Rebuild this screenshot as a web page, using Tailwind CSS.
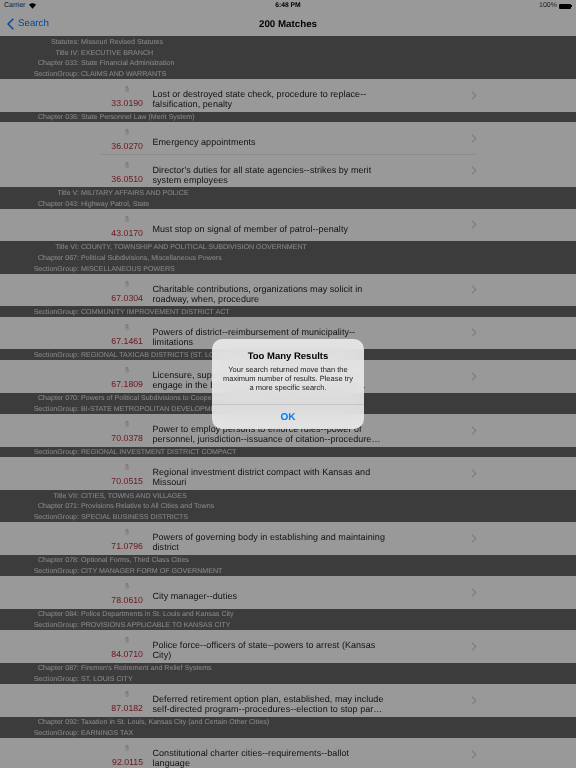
<!DOCTYPE html>
<html lang="en">
<head>
  <meta charset="UTF-8" />
  <title>200 Matches</title>
  <script src="https://cdn.jsdelivr.net/npm/@tailwindcss/browser@4"></script>
</head>
<body class="bg-white overflow-hidden font-['Liberation_Sans',sans-serif] [text-rendering:geometricPrecision]">
  <div class="relative w-[576px] h-[768px] overflow-hidden blur-[0.25px]">
    <!-- Status bar + nav -->
    <header class="h-9 bg-white">
      <div class="h-[11px] pt-px pl-1 pr-[4px] flex items-center justify-between text-[7px] text-black">
        <div class="flex items-center gap-[4px] w-[100px]">
          <span class="text-[#333]">Carrier</span>
          <svg width="7" height="6" viewBox="0 0 14 11" fill="#000"><path d="M7 11 0 3C4-1 10-1 14 3z"/></svg>
        </div>
        <span class="font-bold text-[6.75px]">6:48 PM</span>
        <div class="flex items-center justify-end gap-[2px] w-[100px]">
          <span class="text-[#333]">100%</span>
          <span class="w-3 h-[5px] bg-black rounded-[1px]"></span>
          <span class="w-px h-[2px] bg-black -ml-[2px]"></span>
        </div>
      </div>
      <div class="relative h-[25px] pt-[3px] flex items-center justify-center">
        <div class="absolute left-[7px] top-[6px] flex items-center gap-[4px] text-[#007aff]">
          <svg width="7" height="12" viewBox="0 0 7 12" fill="none" stroke="#007aff" stroke-width="1.5"><path d="M6.3 .7 1 6l5.3 5.3"/></svg>
          <span class="text-[9.75px]">Search</span>
        </div>
        <h1 class="text-[9.75px] font-bold text-black">200 Matches</h1>
      </div>
    </header>

    <main id="list"></main>

    <!-- Dim overlay -->
    <div class="absolute inset-0 bg-black/40"></div>

    <!-- Alert -->
    <div class="absolute left-[212px] top-[339px] w-[152px] h-[90px] rounded-[10px] bg-[#f2f2f2]/85 backdrop-blur-md flex flex-col text-black">
      <div class="h-[65px] pt-[12px] px-1 text-center">
        <h2 class="text-[9.5px] leading-[12px] font-bold">Too Many Results</h2>
        <p class="mt-[2px] text-[7.5px] leading-[9px] text-[#222] whitespace-nowrap">Your search returned move than the<br />maximum number of results. Please try<br />a more specific search.</p>
      </div>
      <div class="flex-1 border-t border-[#c4c4c4] flex items-center justify-center pt-[1px] text-[10px] font-bold text-[#007aff]">OK</div>
    </div>
  </div>

  <script>
    const list = document.getElementById('list');

    // s: section header lines, r: [number, line 1, line 2]
    const data = [
      { s: [['Statutes:', 'Missouri Revised Statutes'], ['Title IV:', 'EXECUTIVE BRANCH'], ['Chapter 033:', 'State Financial Administration'], ['SectionGroup:', 'CLAIMS AND WARRANTS']],
        r: [['33.0190', 'Lost or destroyed state check, procedure to replace--', 'falsification, penalty']] },
      { s: [['Chapter 036:', 'State Personnel Law (Merit System)']],
        r: [['36.0270', 'Emergency appointments'], ['36.0510', "Director's duties for all state agencies--strikes by merit", 'system employees']] },
      { s: [['Title V:', 'MILITARY AFFAIRS AND POLICE'], ['Chapter 043:', 'Highway Patrol, State']],
        r: [['43.0170', 'Must stop on signal of member of patrol--penalty']] },
      { s: [['Title VI:', 'COUNTY, TOWNSHIP AND POLITICAL SUBDIVISION GOVERNMENT'], ['Chapter 067:', 'Political Subdivisions, Miscellaneous Powers'], ['SectionGroup:', 'MISCELLANEOUS POWERS']],
        r: [['67.0304', 'Charitable contributions, organizations may solicit in', 'roadway, when, procedure']] },
      { s: [['SectionGroup:', 'COMMUNITY IMPROVEMENT DISTRICT ACT']],
        r: [['67.1461', 'Powers of district--reimbursement of municipality--', 'limitations']] },
      { s: [['SectionGroup:', 'REGIONAL TAXICAB DISTRICTS (ST. LOUIS)']],
        r: [['67.1809', 'Licensure, supervision of vehicles for hire, license to', 'engage in the business of transporting persons, co…']] },
      { s: [['Chapter 070:', 'Powers of Political Subdivisions to Cooperate or Contract'], ['SectionGroup:', 'BI-STATE METROPOLITAN DEVELOPMENT DISTRICT (MISSOURI AND ILLINOIS)']],
        r: [['70.0378', 'Power to employ persons to enforce rules--power of', 'personnel, jurisdiction--issuance of citation--procedure…']] },
      { s: [['SectionGroup:', 'REGIONAL INVESTMENT DISTRICT COMPACT']],
        r: [['70.0515', 'Regional investment district compact with Kansas and', 'Missouri']] },
      { s: [['Title VII:', 'CITIES, TOWNS AND VILLAGES'], ['Chapter 071:', 'Provisions Relative to All Cities and Towns'], ['SectionGroup:', 'SPECIAL BUSINESS DISTRICTS']],
        r: [['71.0796', 'Powers of governing body in establishing and maintaining', 'district']] },
      { s: [['Chapter 078:', 'Optional Forms, Third Class Cities'], ['SectionGroup:', 'CITY MANAGER FORM OF GOVERNMENT']],
        r: [['78.0610', 'City manager--duties']] },
      { s: [['Chapter 084:', 'Police Departments in St. Louis and Kansas City'], ['SectionGroup:', 'PROVISIONS APPLICABLE TO KANSAS CITY']],
        r: [['84.0710', 'Police force--officers of state--powers to arrest (Kansas', 'City)']] },
      { s: [['Chapter 087:', "Firemen's Retirement and Relief Systems"], ['SectionGroup:', 'ST. LOUIS CITY']],
        r: [['87.0182', 'Deferred retirement option plan, established, may include', 'self-directed program--procedures--election to stop par…']] },
      { s: [['Chapter 092:', 'Taxation in St. Louis, Kansas City (and Certain Other Cities)'], ['SectionGroup:', 'EARNINGS TAX']],
        r: [['92.0115', 'Constitutional charter cities--requirements--ballot', 'language']] },
    ];

    const chevron = '<svg class="absolute left-[471px] top-[11.5px]" width="6" height="9" viewBox="0 0 6 9" fill="none" stroke="#d4d4d8" stroke-width="1.3"><path d="M1 .8 4.8 4.5 1 8.2"/></svg>';

    let html = '';
    data.forEach(group => {
      html += '<section class="bg-[#646464]">';
      group.s.forEach(([key, val]) => {
        html += `<div class="h-[10.75px] pt-[1.5px] flex items-center text-[7.1px] whitespace-nowrap">
          <span class="w-[79px] text-right text-[#e4e4e4]">${key}</span>
          <span class="ml-[2px] text-[#e4e4e4]">${val}</span>
        </div>`;
      });
      html += '</section>';
      group.r.forEach(([num, line1, line2], i) => {
        html += `<div class="relative h-[32.5px] bg-white">
          <div class="absolute left-[100px] w-[44px] top-[6px] text-center text-[7px] leading-[9px] text-[#aaa] pl-[10px]">§</div>
          <div class="absolute left-[100px] w-[43px] top-[18px] text-right text-[8.75px] leading-[12px] text-[#b82a3c]">${num}</div>
          <div class="absolute left-[152.5px] top-[8px] h-6 flex items-center text-[9px] leading-[10px] tracking-[0.05px] text-[#222] whitespace-nowrap"><div>${line1}${line2 ? '<br />' + line2 : ''}</div></div>
          ${chevron}
          ${i < group.r.length - 1 ? '<div class="absolute left-[101px] w-[375px] bottom-0 h-px bg-[#e8e8e8]"></div>' : ''}
        </div>`;
      });
    });
    list.innerHTML = html;
  </script>
</body>
</html>
